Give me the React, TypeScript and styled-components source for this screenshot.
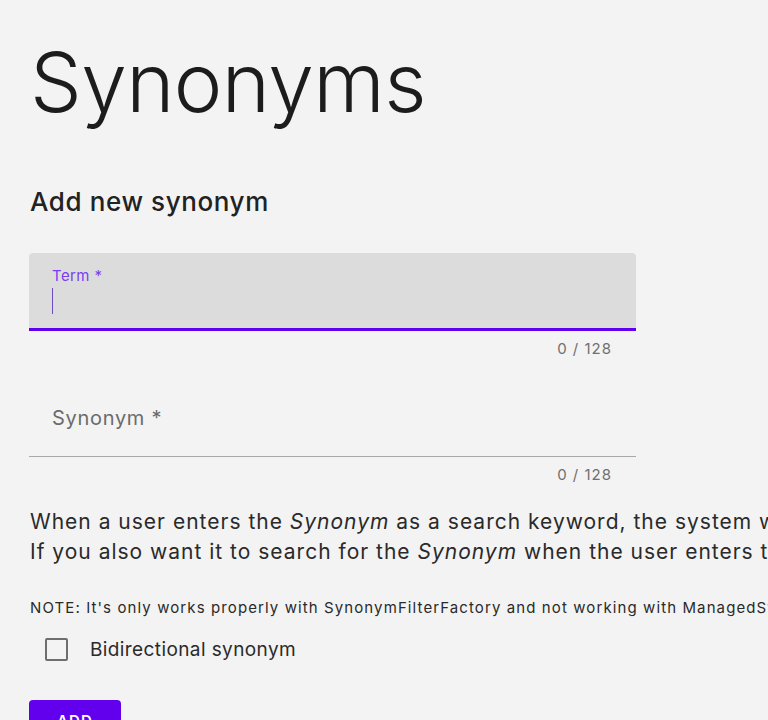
import React, { useState } from 'react';
import styled, { createGlobalStyle } from 'styled-components';

const GlobalStyle = createGlobalStyle`
	html, body {
		margin: 0;
		padding: 0;
		background: #f3f3f3;
		overflow: hidden;
	}
	body {
		font-family: Inter, "Noto Sans", sans-serif;
		color: #1f1f1f;
	}
`;

const App = () => {
	const [term, setTerm] = useState('');
	const [synonym, setSynonym] = useState('');
	const [bidirectional, setBidirectional] = useState(false);

	return (
		<>
			<GlobalStyle />
			<Page>
				<Title>Synonyms</Title>
				<SubTitle>Add new synonym</SubTitle>
				<Form onSubmit={(e) => e.preventDefault()}>
					<Field $filled $focused>
						<FieldLabel $focused>Term *</FieldLabel>
						{term === '' && <Caret />}
						<FieldInput
							value={term}
							maxLength={128}
							onChange={(e) => setTerm(e.target.value)}
						/>
					</Field>
					<Counter>{term.length} / 128</Counter>
					<Field>
						<FieldLabel $big>Synonym *</FieldLabel>
						<FieldInput
							value={synonym}
							maxLength={128}
							onChange={(e) => setSynonym(e.target.value)}
						/>
					</Field>
					<Counter>{synonym.length} / 128</Counter>
				</Form>
				<Description>
					<Line>
						When a user enters the <em>Synonym</em> as a search keyword, the system will also search for the <em>Term</em>.
					</Line>
					<Line>
						If you also want it to search for the <em>Synonym</em> when the user enters the <em>Term</em>, check bidirectional synonym.
					</Line>
				</Description>
				<Note>
					NOTE: It's only works properly with SynonymFilterFactory and not working with ManagedSynonymFilterFactory.
				</Note>
				<CheckRow>
					<CheckBox
						type="checkbox"
						checked={bidirectional}
						onChange={(e) => setBidirectional(e.target.checked)}
					/>
					<span>Bidirectional synonym</span>
				</CheckRow>
				<AddButton type="button">ADD</AddButton>
			</Page>
		</>
	);
};

export default App;

const Page = styled.div`
	padding: 35px 0 0 30px;
	width: 1600px;
`;

const Title = styled.h1`
	margin: 0;
	font-size: 82px;
	font-weight: 300;
	line-height: 96px;
	letter-spacing: -0.6px;
	color: #1c1c1c;
`;

const SubTitle = styled.h2`
	margin: 55px 0 0;
	font-size: 26px;
	font-weight: 500;
	line-height: 32px;
	letter-spacing: 0.6px;
	color: #222;
`;

const Form = styled.form`
	margin-top: 35px;
	width: 607px;
	margin-left: -1px;
`;

const Field = styled.label<{ $filled?: boolean; $focused?: boolean }>`
	position: relative;
	display: block;
	height: 78px;
	box-sizing: border-box;
	border-radius: 4px 4px 0 0;
	background: ${({ $filled }) => ($filled ? '#dcdcdc' : 'transparent')};
	border-bottom: ${({ $focused }) => ($focused ? '3px solid #6200ee' : '1px solid #a8a8a8')};
	&:not(:first-child) {
		margin-top: 21px;
	}
`;

const FieldLabel = styled.span<{ $focused?: boolean; $big?: boolean }>`
	position: absolute;
	left: 23px;
	top: ${({ $big }) => ($big ? '27px' : '13px')};
	font-size: ${({ $big }) => ($big ? '20px' : '15px')};
	letter-spacing: ${({ $big }) => ($big ? '0.7px' : '0.4px')};
	color: ${({ $focused }) => ($focused ? '#7a3ff0' : '#6b6b6b')};
	pointer-events: none;
`;

const Caret = styled.span`
	position: absolute;
	left: 23px;
	top: 35px;
	width: 1px;
	height: 26px;
	background: #6a4bc4;
`;

const FieldInput = styled.input`
	position: absolute;
	left: 23px;
	right: 16px;
	bottom: 10px;
	height: 30px;
	padding: 0;
	border: none;
	outline: none;
	background: transparent;
	font-family: inherit;
	font-size: 18px;
	color: #222;
	caret-color: #6200ee;
`;

const Counter = styled.div`
	display: flex;
	justify-content: flex-end;
	padding: 9px 24px 0 0;
	font-size: 15px;
	line-height: 18px;
	color: #6f6f6f;
	letter-spacing: 1px;
`;

const Description = styled.div`
	margin-top: 23px;
	font-size: 21px;
	line-height: 30px;
	letter-spacing: 1px;
	color: #2a2a2a;
	em {
		font-style: italic;
	}
`;

const Line = styled.p`
	margin: 0;
	white-space: nowrap;
`;

const Note = styled.p`
	margin: 32px 0 0;
	font-size: 15px;
	line-height: 18px;
	letter-spacing: 1.1px;
	color: #2a2a2a;
	white-space: nowrap;
`;

const CheckRow = styled.label`
	display: flex;
	align-items: center;
	gap: 22px;
	margin: 21px 0 0 15px;
	font-size: 19px;
	letter-spacing: 0.4px;
	color: #2a2a2a;
`;

const CheckBox = styled.input`
	appearance: none;
	margin: 0;
	width: 23px;
	height: 23px;
	border: 2px solid #6e6e6e;
	border-radius: 2px;
	background: transparent;
	box-sizing: border-box;
	&:checked {
		background: #6200ee;
		border-color: #6200ee;
	}
`;

const AddButton = styled.button`
	margin-top: 39px;
	margin-left: -1px;
	width: 92px;
	height: 40px;
	border: none;
	border-radius: 4px;
	background: #6200ee;
	color: #fff;
	font-family: inherit;
	font-size: 15px;
	font-weight: 600;
	letter-spacing: 1.2px;
`;
